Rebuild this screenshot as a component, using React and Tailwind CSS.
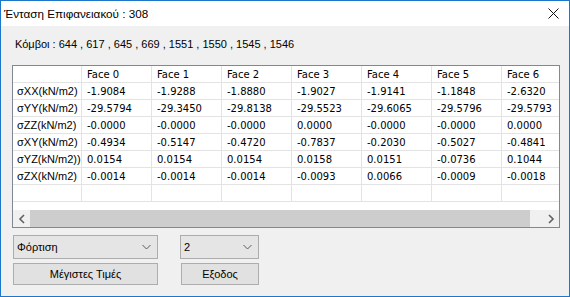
import React from 'react';

const cols = ['Face 0', 'Face 1', 'Face 2', 'Face 3', 'Face 4', 'Face 5', 'Face 6'];

const rows = [
    { label: 'σXX(kN/m2)', vals: ['-1.9084', '-1.9288', '-1.8880', '-1.9027', '-1.9141', '-1.1848', '-2.6320'] },
    { label: 'σYY(kN/m2)', vals: ['-29.5794', '-29.3450', '-29.8138', '-29.5523', '-29.6065', '-29.5796', '-29.5793'] },
    { label: 'σZZ(kN/m2)', vals: ['-0.0000', '-0.0000', '-0.0000', '0.0000', '-0.0000', '-0.0000', '0.0000'] },
    { label: 'σXY(kN/m2)', vals: ['-0.4934', '-0.5147', '-0.4720', '-0.7837', '-0.2030', '-0.5027', '-0.4841'] },
    { label: 'σYZ(kN/m2))', vals: ['0.0154', '0.0154', '0.0154', '0.0158', '0.0151', '-0.0736', '0.1044'] },
    { label: 'σZX(kN/m2)', vals: ['-0.0014', '-0.0014', '-0.0014', '-0.0093', '0.0066', '-0.0009', '-0.0018'] },
];

const ui = "font-['Liberation_Sans',sans-serif]";
const grid = "font-['DejaVu_Sans',sans-serif] text-[10px]";

function Chevron({ dir }) {
    const d = dir === 'left' ? 'M6 1 L2 5 L6 9' : 'M2 1 L6 5 L2 9';
    return (
        <svg width="8" height="10" viewBox="0 0 8 10">
            <path d={d} fill="none" stroke="#606060" strokeWidth="1.6" />
        </svg>
    );
}

function Combo({ value, className }) {
    return (
        <div className={`h-[24px] flex items-center justify-between border border-[#acacac] bg-[#e5e5e5] pl-[3px] pr-[6px] text-[11px] text-black ${className}`}>
            <span>{value}</span>
            <svg width="9" height="6" viewBox="0 0 9 6">
                <path d="M0.5 1 L4.5 5 L8.5 1" fill="none" stroke="#5a5a5a" strokeWidth="1" />
            </svg>
        </div>
    );
}

export default function App() {
    return (
        <div className={`w-[570px] h-[297px] flex flex-col border border-[#1c76c9] bg-[#f0f0f0] text-black ${ui}`}>
            {/* title bar */}
            <div className="h-[25px] bg-white flex items-center justify-between pl-[3px] pr-[10px]">
                <span className="text-[11.7px]">Ένταση Επιφανειακού : 308</span>
                <svg width="11" height="11" viewBox="0 0 11 11">
                    <path d="M0.5 0.5 L10.5 10.5 M10.5 0.5 L0.5 10.5" stroke="#111" strokeWidth="1" />
                </svg>
            </div>

            <div className="flex-1 flex flex-col pl-[11px] pr-[9px]">
                <div className="pt-[11px] pl-[3px] text-[11px] leading-[14px]">
                    Κόμβοι : 644 , 617 , 645 , 669 , 1551 , 1550 , 1545 , 1546
                </div>

                {/* data grid */}
                <div className="mt-[14px] h-[163px] border border-[#828790] bg-white flex flex-col overflow-hidden">
                    <div className="flex-1 overflow-hidden">
                        <div className="flex h-[17px] border-b border-[#e3e3e3] w-max">
                            <div className="w-[69px] border-r border-[#e3e3e3]" />
                            {cols.map((c) => (
                                <div key={c} className={`w-[70px] border-r border-[#e3e3e3] pl-[5px] flex items-center ${grid}`}>{c}</div>
                            ))}
                        </div>
                        {rows.map((r) => (
                            <div key={r.label} className="flex h-[17px] border-b border-[#e3e3e3] w-max">
                                <div className="w-[69px] border-r border-[#e3e3e3] pl-[4px] flex items-center text-[11px] whitespace-nowrap">{r.label}</div>
                                {r.vals.map((v, i) => (
                                    <div key={i} className={`w-[70px] border-r border-[#e3e3e3] pl-[5px] flex items-center ${grid}`}>{v}</div>
                                ))}
                            </div>
                        ))}
                        <div className="flex h-[17px] border-b border-[#e3e3e3] w-max">
                            <div className="w-[69px] border-r border-[#e3e3e3]" />
                            {cols.map((c) => (
                                <div key={c} className="w-[70px] border-r border-[#e3e3e3]" />
                            ))}
                        </div>
                    </div>
                    {/* horizontal scrollbar */}
                    <div className="h-[17px] flex bg-[#f0f0f0]">
                        <div className="w-[17px] flex items-center justify-center"><Chevron dir="left" /></div>
                        <div className="flex-1 flex">
                            <div className="w-[500px] bg-[#cdcdcd]" />
                        </div>
                        <div className="w-[17px] flex items-center justify-center"><Chevron dir="right" /></div>
                    </div>
                </div>

                {/* controls */}
                <div className="mt-[7px] flex gap-[22px] pl-[1px]">
                    <Combo value="Φόρτιση" className="w-[145px]" />
                    <Combo value="2" className="w-[79px]" />
                </div>
                <div className="mt-[4px] flex gap-[23px] pl-[1px]">
                    <button className="w-[145px] h-[22px] border border-[#adadad] bg-[#e1e1e1] text-[11px]">Μέγιστες Τιμές</button>
                    <button className="w-[78px] h-[22px] border border-[#adadad] bg-[#e1e1e1] text-[11px]">Εξοδος</button>
                </div>
            </div>
        </div>
    );
}
